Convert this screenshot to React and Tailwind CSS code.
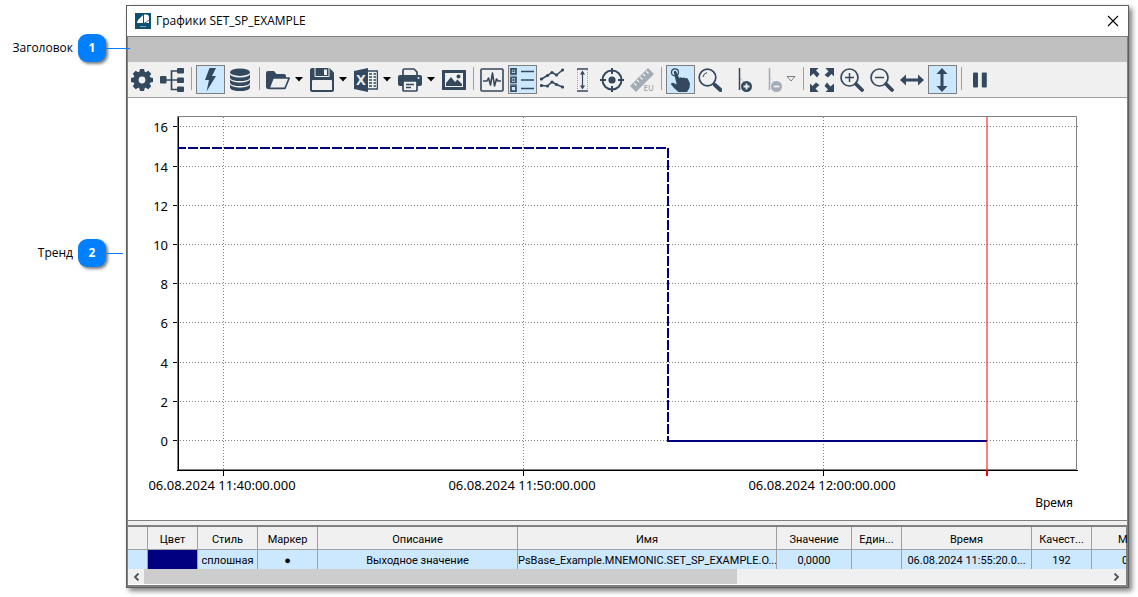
import React from 'react';

const INK = '#34495e';
const PALE = '#f0f0f0';
const MUTED = '#a3acb5';

const icons = {
  gear: (
    <g fill={INK}>
      {[0, 45, 90, 135].map(angle => (
        <path key={angle} d="M9.2 4 10 1h4l.8 3v16L14 23h-4l-.8-3z" transform={`rotate(${angle} 12 12)`} />
      ))}
      <circle cx="12" cy="12" r="8.5" />
      <circle cx="12" cy="12" r="3.4" fill={PALE} />
    </g>
  ),
  tree: (
    <g fill={INK}>
      <rect x="0" y="8" width="6.5" height="7.5" rx="1" />
      <rect x="17" y="0" width="7" height="5.5" rx="1" />
      <rect x="17" y="9.5" width="7" height="5.5" rx="1" />
      <rect x="17" y="18.5" width="7" height="5.5" rx="1" />
      <path d="M6 12h11M18 3h-6.5v18.5H18" fill="none" stroke={INK} strokeWidth="1.7" />
    </g>
  ),
  bolt: <path d="M11.5 0H18l-4 8h4L8.5 23.5 11 12H7z" fill={INK} />,
  database: (
    <g fill={INK}>
      <ellipse cx="12" cy="4.2" rx="10" ry="3.7" />
      <path d="M2 6c0 4.6 20 4.6 20 0v3.4c0 4.8-20 4.8-20 0z" />
      <path d="M2 11c0 4.6 20 4.6 20 0v3.4c0 4.8-20 4.8-20 0z" />
      <path d="M2 16c0 4.6 20 4.6 20 0v3.4c0 4.8-20 4.8-20 0z" />
    </g>
  ),
  folder: (
    <g>
      <path d="M0 19V5q0-2 2-2h6l2.5 3H18q2 0 2 2v3H7L3 21H2q-2 0-2-2z" fill={INK} />
      <path d="M7 10h16.2L19 20.3H3z" fill={PALE} stroke={INK} strokeWidth="1.7" strokeLinejoin="round" />
    </g>
  ),
  save: (
    <g>
      <path d="M2 0h17.5L24 4.500V22q0 2-2 2H2q-2 0-2-2V2q0-2 2-2z" fill={INK} />
      <path d="M5 0v8.500h14V0" fill="none" stroke={PALE} strokeWidth="1" />
      <rect x="14" y="1.5" width="3" height="5.5" fill={PALE} />
      <path d="M2 22V13q0-1 1-1h18q1 0 1 1v9z" fill={PALE} />
    </g>
  ),
  excel: (
    <g>
      <rect x="13" y="3" width="10.5" height="18" fill={PALE} stroke={INK} strokeWidth="1.5" />
      <path d="M15 6h3M19.5 6H22M15 9h3M19.5 9H22M15 12h3M19.5 12H22M15 15h3M19.5 15H22M15 18h3M19.5 18H22" stroke={INK} strokeWidth="1.7" />
      <path d="M0 3 14 0v24L0 21z" fill={INK} />
      <text x="7" y="17" textAnchor="middle" fill={PALE} fontSize="14" fontWeight="700" fontFamily="Open Sans, sans-serif">X</text>
    </g>
  ),
  printer: (
    <g>
      <path d="M5 8V2.500Q5 1 6.500 1h9.500L19 4v4z" fill={PALE} stroke={INK} strokeWidth="1.7" />
      <path d="M2 7h20q2 0 2 2v7q0 2-2 2H2q-2 0-2-2V9q0-2 2-2z" fill={INK} />
      <circle cx="20.5" cy="10" r="1" fill={PALE} />
      <rect x="5" y="13" width="14" height="10" rx="1" fill={PALE} stroke={INK} strokeWidth="1.7" />
      <path d="M8 16.500h8M8 19.500h5" stroke={INK} strokeWidth="1.3" />
    </g>
  ),
  image: (
    <g>
      <rect x="1.5" y="3.5" width="21" height="17" fill={PALE} stroke={INK} strokeWidth="3" />
      <path d="M4 18v-3l5-6 4 5 2.500-2.500L20 16v2z" fill={INK} />
      <circle cx="16.5" cy="8.5" r="2" fill={INK} />
    </g>
  ),
  pulse: (
    <g fill="none" stroke={INK}>
      <rect x="1" y="1" width="22" height="22" rx="1" strokeWidth="1.6" />
      <path d="M3 13h4l1.500-3 2 7 2-12 2 13 2-7 1.500 2h3" strokeWidth="1.6" strokeLinejoin="round" />
    </g>
  ),
  list: (
    <g fill="none" stroke={INK} strokeWidth="1.7">
      <path d="M1 .8h5v5H1zM1 9.500h5v5H1zM1 18.200h5v5H1z" />
      <path d="M0 8h7M0 16.500h7" strokeWidth="1" strokeOpacity=".6" />
      <path d="M2.500 3.300h2M2.500 12h2" strokeWidth="2" />
      <path d="M11 3.500h13M11 12h13M11 20.500h13" strokeWidth="1.5" />
    </g>
  ),
  trend: (
    <g fill={INK}>
      <path d="m1.500 11 6-3.500L12 4.500l4.500 2.500 6-5M1.500 17.500l6 .5 4.500-4 4.500 2.500 6 2.500" fill="none" stroke={INK} strokeWidth="1.5" />
      {[[1.5, 11], [7.5, 7.5], [12, 4.5], [16.5, 7], [22.5, 2], [1.5, 17.5], [7.5, 18], [12, 14], [16.5, 16.5], [22.5, 19]].map(([x, y]) => (
        <circle key={`${x}-${y}`} cx={x} cy={y} r="1.6" />
      ))}
    </g>
  ),
  measure: (
    <g fill="none" stroke={INK}>
      <path d="M7 1h11M7 23h11" strokeWidth="1.5" />
      <path d="M7.500 2v20M17.500 2v20" strokeWidth="1" strokeDasharray="1 1" strokeOpacity=".45" />
      <path d="M12.500 4v16" strokeWidth="1.2" />
      <path d="m12.500 2.500 2.500 4h-5zM12.500 21.500l2.500-4h-5z" fill={INK} stroke="none" />
    </g>
  ),
  target: (
    <g fill="none" stroke={INK} strokeWidth="2">
      <circle cx="12" cy="12" r="9.5" />
      <circle cx="12" cy="12" r="3.6" fill={INK} stroke="none" />
      <path d="M12 0v6M12 18v6M0 12h6M18 12h6" />
    </g>
  ),
  ruler: (
    <g>
      <path d="M0 18 18 0l6 6L6 24z" fill={MUTED} />
      <path d="m4 15 2.500 2.500M7 12l2 2M10 9l2.500 2.500M13 6l2 2M16 3l2.500 2.500" stroke={PALE} strokeWidth="1.2" />
      <text x="13.5" y="23" fill={MUTED} fontSize="8" fontWeight="600" fontFamily="Open Sans, sans-serif">EU</text>
    </g>
  ),
  hand: (
    <g>
      <circle cx="7" cy="4.3" r="3.5" fill="none" stroke={INK} strokeWidth="1.2" />
      <path d="M5.700 4q1.300-2.500 2.800 0l2.700 6q1.300-1.500 3 0 1.500-1.300 3 .3 1.700-1 2.800.7l2 4.500-.5 4.500L19 24H10.500L6.500 20.500 3 16.500q0-2 2-1.700l3.700 1.700z" fill={INK} />
    </g>
  ),
  magnifier: (
    <g fill="none" stroke={INK}>
      <circle cx="9.5" cy="9.5" r="8.3" strokeWidth="1.7" />
      <path d="M5 9q.5-3.500 4-4.500" strokeWidth="1" />
      <path d="m15.500 15.500 2 2" strokeWidth="2" />
      <path d="m17 17 5.500 5" strokeWidth="4" strokeLinecap="round" />
    </g>
  ),
  addCursor: (
    <g>
      <path d="M11.500 0v22" stroke={INK} strokeWidth="1.5" />
      <path d="m12 10 4 4" stroke={INK} strokeWidth="1" strokeDasharray="1 1" strokeOpacity=".6" />
      <circle cx="18.5" cy="18.5" r="5.5" fill={INK} />
      <path d="M18.500 15.500v6M15.500 18.500h6" stroke={PALE} strokeWidth="1.8" />
    </g>
  ),
  removeCursor: (
    <g>
      <path d="M11.500 0v22" stroke={MUTED} strokeWidth="1.5" />
      <path d="m12 10 4 4" stroke={MUTED} strokeWidth="1" strokeDasharray="1 1" strokeOpacity=".6" />
      <circle cx="18.5" cy="18.5" r="5.5" fill={MUTED} />
      <path d="M15.500 18.500h6" stroke={PALE} strokeWidth="1.8" />
    </g>
  ),
  expand: (
    <g fill={INK}>
      {[0, 90, 180, 270].map(angle => (
        <path key={angle} d="M0 0h8.500L6 2.500 9.500 6 7 9.500 3.500 5.500 0 8.500z" transform={`rotate(${angle} 12 12)`} />
      ))}
    </g>
  ),
  zoomIn: (
    <g fill="none" stroke={INK}>
      <circle cx="9.5" cy="9.5" r="8.5" strokeWidth="1.7" />
      <path d="M9.500 5v9M5 9.500h9" strokeWidth="1.5" />
      <path d="m16 16 6 6" strokeWidth="3.8" strokeLinecap="round" />
    </g>
  ),
  zoomOut: (
    <g fill="none" stroke={INK}>
      <circle cx="9.5" cy="9.5" r="8.5" strokeWidth="1.7" />
      <path d="M5 9.500h9" strokeWidth="1.5" />
      <path d="m16 16 6 6" strokeWidth="3.8" strokeLinecap="round" />
    </g>
  ),
  horizontal: <path d="m0 12 6-5.500v4h12v-4l6 5.500-6 5.500v-4H6v4z" fill={INK} />,
  vertical: <path d="m12 0 5.500 6h-4v12h4L12 24l-5.500-6h4V6h-4z" fill={INK} />,
  pause: (
    <g fill={INK}>
      <rect x="5" y="4.5" width="5" height="15" rx="1" />
      <rect x="13.8" y="4.5" width="5" height="15" rx="1" />
    </g>
  ),
};

const toolbar = [
  [
    { icon: 'gear', label: 'Настройки' },
    { icon: 'tree', label: 'Дерево сигналов' },
  ],
  [
    { icon: 'bolt', label: 'Оперативные данные', active: true },
    { icon: 'database', label: 'Исторические данные' },
  ],
  [
    { icon: 'folder', label: 'Открыть', menu: true },
    { icon: 'save', label: 'Сохранить', menu: true },
    { icon: 'excel', label: 'Экспорт в Excel', menu: true },
    { icon: 'printer', label: 'Печать', menu: true },
    { icon: 'image', label: 'Сохранить изображение' },
  ],
  [
    { icon: 'pulse', label: 'График' },
    { icon: 'list', label: 'Легенда', active: true },
    { icon: 'trend', label: 'Маркеры' },
    { icon: 'measure', label: 'Масштаб' },
    { icon: 'target', label: 'Центрировать' },
    { icon: 'ruler', label: 'Единицы измерения', disabled: true },
  ],
  [
    { icon: 'hand', label: 'Перемещение', active: true },
    { icon: 'magnifier', label: 'Лупа' },
    { icon: 'addCursor', label: 'Добавить курсор' },
    { icon: 'removeCursor', label: 'Удалить курсор', menu: true, disabled: true },
  ],
  [
    { icon: 'expand', label: 'Показать всё' },
    { icon: 'zoomIn', label: 'Увеличить' },
    { icon: 'zoomOut', label: 'Уменьшить' },
    { icon: 'horizontal', label: 'По горизонтали' },
    { icon: 'vertical', label: 'По вертикали', active: true },
  ],
  [{ icon: 'pause', label: 'Пауза' }],
];

const columns = [
  { title: '', width: 'w-[20px]' },
  { title: 'Цвет', width: 'w-[50px]' },
  { title: 'Стиль', width: 'w-[60px]', value: 'сплошная' },
  { title: 'Маркер', width: 'w-[60px]', value: '●' },
  { title: 'Описание', width: 'w-[200px]', value: 'Выходное значение' },
  { title: 'Имя', width: 'w-[259px]', value: 'PsBase_Example.MNEMONIC.SET_SP_EXAMPLE.O...' },
  { title: 'Значение', width: 'w-[75px]', value: '0,0000' },
  { title: 'Един...', width: 'w-[50px]' },
  { title: 'Время', width: 'w-[130px]', value: '06.08.2024 11:55:20.0...' },
  { title: 'Качест...', width: 'w-[60px]', value: '192' },
];

const yTicks = [
  [16, 28], [14, 68], [12, 107], [10, 146], [8, 185], [6, 224], [4, 264], [2, 303], [0, 342],
];

const xTicks = [
  ['06.08.2024 11:40:00.000', 95],
  ['06.08.2024 11:50:00.000', 395],
  ['06.08.2024 12:00:00.000', 695],
];

const ToolButton = ({ icon, label, active, disabled, menu }) => (
  <div className="flex">
    <button
      type="button"
      aria-label={label}
      disabled={disabled}
      className={`flex items-start w-[29px] h-[29px] mr-px pl-px pt-0.5 border ${active ? 'bg-[#cce8ff] border-[#7f7f7f]' : 'border-transparent'}`}
    >
      <svg viewBox="0 0 24 24" className="block w-6 h-6 shrink-0">{icons[icon]}</svg>
    </button>
    {menu && (
      <button type="button" aria-label={`${label}: меню`} disabled={disabled} className="w-3.5 h-7 flex items-center justify-start">
        <svg viewBox="0 0 10 6" className="w-[10px] h-[6px]">
          {disabled
            ? <path d="M1 .5h8L5 5z" fill="#f0f0f0" stroke="#7f7f7f" />
            : <path d="M1 1h8L5 5.500z" fill="#000" />}
        </svg>
      </button>
    )}
  </div>
);

const Toolbar = () => (
  <div role="toolbar" className="flex h-9 pt-[3px] bg-[#f0f0f0] border-b border-[#a0a0a0]">
    {toolbar.map((group, i) => (
      <React.Fragment key={group[0].icon}>
        {i > 0 && <div className="w-2 pl-[3px] pt-0.5"><div className="w-px h-[23px] bg-[#a0a0a0]" /></div>}
        {group.map(item => <ToolButton key={item.icon} {...item} />)}
      </React.Fragment>
    ))}
  </div>
);

const Chart = () => (
  <svg viewBox="0 0 999 422" className="block w-full bg-white" fontFamily="Noto Sans, sans-serif" fontSize="13">
    {/* Grid */}
    <g stroke="#808080" strokeDasharray="1 2">
      {yTicks.map(([label, y]) => <path key={label} d={`M52 ${y + 0.5}H950`} />)}
      {xTicks.map(([label, x]) => <path key={label} d={`M${x + 0.5} 19V371`} />)}
    </g>

    {/* Frame and axes */}
    <path d="M49.5 372V18.5H948.5V371.5H49.5" fill="none" stroke="#808080" />
    <path d="M50.5 19V372.5M49 372.5H950" stroke="#000" fill="none" />
    {yTicks.map(([label, y]) => (
      <g key={label}>
        <path d={`M45 ${y + 0.5}H49`} stroke="#000" />
        <text x="40" y={y + 6} textAnchor="end">{label}</text>
      </g>
    ))}
    {xTicks.map(([label, x]) => (
      <g key={label}>
        <path d={`M${x + 0.5} 372V378`} stroke="#000" />
        <text x={x - 1} y="392" textAnchor="middle">{label}</text>
      </g>
    ))}
    <text x="945" y="409" textAnchor="end" fontSize="12">Время</text>

    {/* Series */}
    <path d="M50 50H540V343" fill="none" stroke="#000080" strokeWidth="2" strokeDasharray="10 2" strokeDashoffset="2" />
    <path d="M539 343H859" stroke="#000080" strokeWidth="2" />

    {/* Cursor */}
    <path d="M859 19V372" stroke="#ff0000" strokeOpacity=".5" strokeWidth="2" />
    <path d="M859 372V378" stroke="#ff0000" strokeWidth="2" />
  </svg>
);

const Legend = () => (
  <div className="border-t-2 border-r border-b border-[#808080] bg-[#f0f0f0]">
    <table className="w-full table-fixed border-separate border-spacing-0 text-[11px] leading-[14px] font-[Roboto,sans-serif]">
      <thead>
        <tr className="h-[23px]">
          {columns.map((col, i) => (
            <th key={i} scope="col" className={`${col.width} p-0 pt-[3px] font-normal border-r border-b border-[#a0a0a0]`}>{col.title}</th>
          ))}
          <th scope="col" className="p-0 pt-[3px] pl-[26px] font-normal text-left border-b border-[#a0a0a0]">М</th>
        </tr>
      </thead>
      <tbody>
        <tr className="h-[19px] bg-[#cce8ff]">
          {columns.map((col, i) => (
            <td key={i} className={`p-0 pt-[3px] text-center whitespace-nowrap overflow-hidden border-r border-[#a0a0a0] ${col.title === 'Цвет' ? 'bg-[#000080]' : ''}`}>
              {col.value}
            </td>
          ))}
          <td className="p-0 pt-[3px] pl-[30px] overflow-hidden">0</td>
        </tr>
      </tbody>
    </table>
    <div className="flex h-4 border-b border-white">
      <button type="button" aria-label="Прокрутить влево" className="w-4 flex items-center justify-center">
        <svg viewBox="0 0 8 8" className="w-2 h-2"><path d="M6.500.5 3 4l3.500 3.500" fill="none" stroke="#505050" strokeWidth="1.8" /></svg>
      </button>
      <div className="flex-1"><div className="w-8/13 h-full bg-[#cdcdcd]" /></div>
      <button type="button" aria-label="Прокрутить вправо" className="w-[18px] flex items-center justify-center">
        <svg viewBox="0 0 8 8" className="w-2 h-2"><path d="M1.500.5 5 4 1.500 7.500" fill="none" stroke="#505050" strokeWidth="1.8" /></svg>
      </button>
    </div>
  </div>
);

const Callout = ({ number, label, line }) => (
  <div className="flex items-center justify-end">
    <span className="mr-[5px]">{label}</span>
    <span className="w-7 h-7 rounded-[9px] bg-[#0080ff] text-white font-bold flex items-center justify-center shadow-[2px_2px_3px_rgba(0,0,0,0.5)]">
      {number}
    </span>
    <span className="relative w-5 h-px">
      <span className={`absolute left-0 top-0 z-10 h-px bg-[#0080ff] ${line}`} />
    </span>
  </div>
);

const App = () => (
  <div className="min-h-screen flex bg-white text-black text-xs font-['Open_Sans',sans-serif]">
    <aside className="w-[126px] shrink-0 pt-[34px] flex flex-col gap-[177px]">
      <Callout number={1} label="Заголовок" line="w-6" />
      <Callout number={2} label="Тренд" line="w-[17px]" />
    </aside>

    <main className="flex-1 min-w-0 self-start mt-[5px] mr-[9px] border border-[#5f5f5f] bg-white shadow-[3px_3px_5px_rgba(0,0,0,0.5)]">
      {/* Title bar */}
      <header className="flex items-center h-[30px] pl-2 pr-[9px]">
        <svg viewBox="0 0 16 16" className="w-4 h-4">
          <path d="M0 0h16v16H0z" fill="#0b4f71" />
          <path d="M8 2v8H2q0-2 1.500-3.500z" fill="#fff" />
          <path d="M9 1.500h2q3 0 3 3V7L9 10z" fill="#fff" />
          <path d="M10.500 10 14 7.500V10z" fill="#fff" />
          <path d="M5 13.500h6" stroke="#7da3b5" />
        </svg>
        <h1 className="ml-[5px]">Графики SET_SP_EXAMPLE</h1>
        <button type="button" aria-label="Закрыть" className="ml-auto">
          <svg viewBox="0 0 12 12" className="w-3 h-3"><path d="m1 1 10 10M11 1 1 11" stroke="#000" strokeWidth="1.1" /></svg>
        </button>
      </header>

      <div className="border border-[#808080]">
        <div className="h-[25px] bg-[#c0c0c0]" />
        <Toolbar />
        <Chart />
        <div className="h-[5px] bg-[#f0f0f0] border-t border-[#808080]" />
        <Legend />
      </div>
    </main>
  </div>
);

export default App;
